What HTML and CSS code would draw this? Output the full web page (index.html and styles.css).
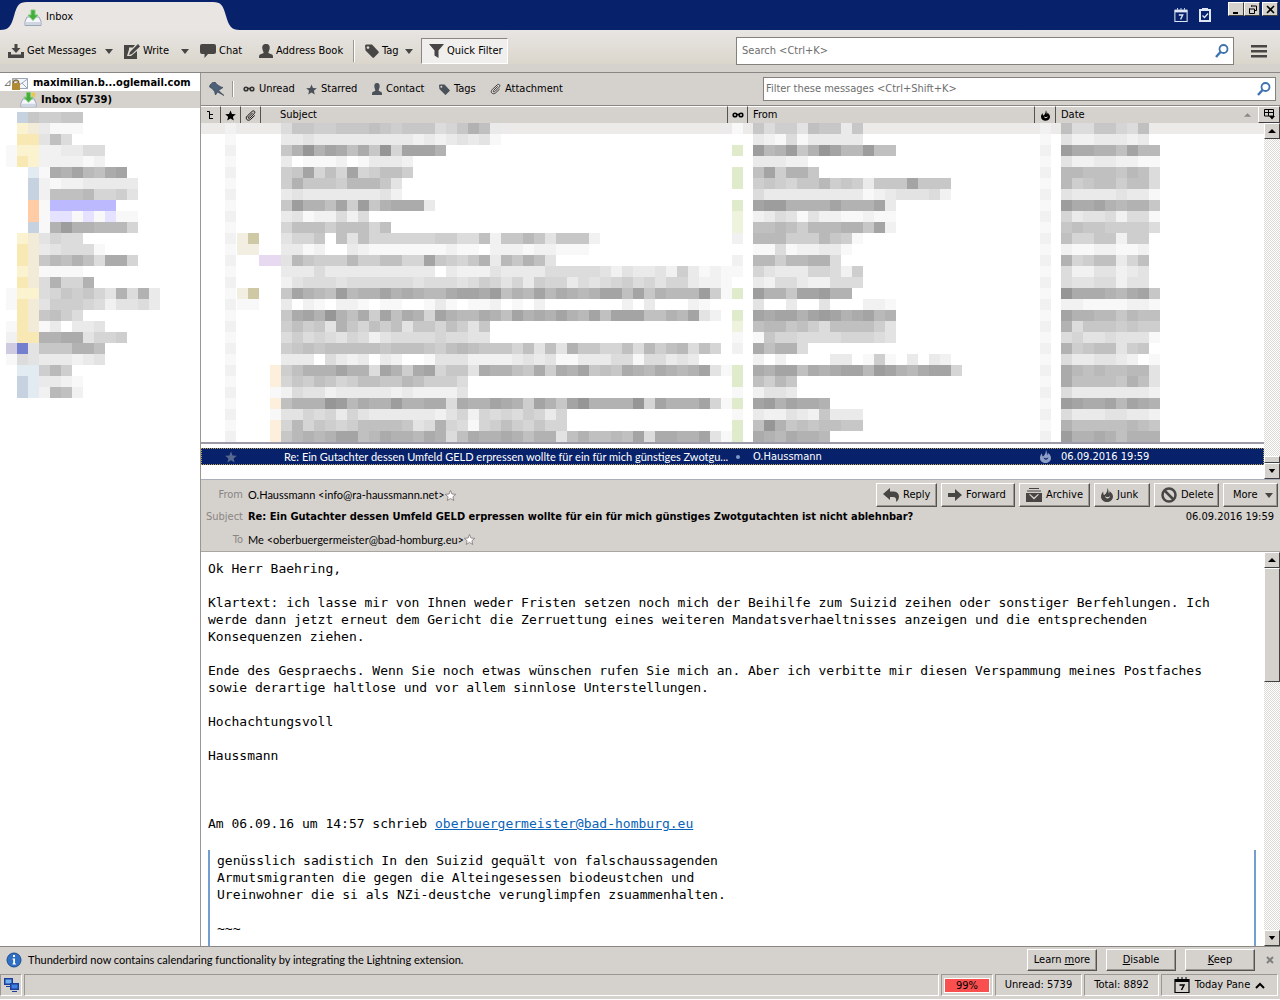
FILE: index.html
```html
<!DOCTYPE html>
<html lang="en">
<head>
<meta charset="utf-8">
<title>Inbox</title>
<link rel="stylesheet" href="styles.css">
</head>
<body>
<svg class="defs" width="0" height="0" aria-hidden="true">
  <symbol id="star" viewBox="0 0 12 12"><path d="M6 0.5 7.6 4.4 11.8 4.7 8.6 7.4 9.6 11.5 6 9.2 2.4 11.5 3.4 7.4 0.2 4.7 4.4 4.4Z"/></symbol>
  <symbol id="flame" viewBox="0 0 12 14"><path fill-rule="evenodd" d="M6.500 0C8 2 7 4 8 5.500C8.500 4.500 8.500 4 8.300 3C10.500 4.500 12 6.500 12 8.500C12 12 9 14 6 14S0 12 0 8.500C0 6 1.500 4.500 2.200 3.500C2.300 5 2.200 6.500 3.200 7C5 6 6.500 3.500 6.500 0ZM4 7.500C4 11.500 9 11.500 9 7.500C8.500 9.500 4.500 9.500 4 7.500Z"/></symbol>
  <symbol id="clip" viewBox="0 0 12 12"><path d="M8.500 3 4 7.500C3 8.800 4.300 9.800 5.300 8.800L10 4C12 1.800 9.500 0 7.800 1.500L2.500 6.500C-0.500 9.500 3 12.500 5.800 10.500L10.500 6" fill="none" stroke="currentColor" stroke-width="1"/></symbol>
  <symbol id="glasses" viewBox="0 0 12 6"><g fill="none" stroke="currentColor" stroke-width="1.600"><circle cx="3" cy="3" r="1.800"/><circle cx="9" cy="3" r="1.800"/><path d="M4.500 2.500h3"/></g></symbol>
  <symbol id="tagicon" viewBox="0 0 14 14"><path fill-rule="evenodd" d="M0 1.500 1 0.500 7 0.500 13.500 7.500C14 8 14 8.500 13.500 9L9 13.500C8.500 14 8 14 7.500 13.500L0.500 6.500ZM3 2.200a1.300 1.300 0 1 0 0.010 0Z"/></symbol>
  <symbol id="person" viewBox="0 0 14 14"><path d="M7 0C10 0 11 2 10.700 4.500C10.400 6.500 9.500 7.500 9.300 9L13 10.500C14 11 14 12 14 14H0C0 12 0 11 1 10.500L4.700 9C4.500 7.500 3.600 6.500 3.300 4.500C3 2 4 0 7 0Z"/></symbol>
  <symbol id="search" viewBox="0 0 14 14"><g fill="none" stroke="#3e72b0"><circle cx="8.500" cy="5" r="4" stroke-width="1.800"/><path d="M5.500 8 1 13" stroke-width="2.400"/></g></symbol>
  <symbol id="down" viewBox="0 0 8 5"><path d="M0 0H8L4 5Z"/></symbol>
  <symbol id="up" viewBox="0 0 8 4"><path d="M0 4H8L4 0Z"/></symbol>
  <symbol id="tray" viewBox="0 0 18 17"><path d="M3 8 1 12.500V16.500H17V12.500L15 8Z" fill="#f4f6fb" stroke="#9aa5b5"/><path d="M2 13H16V16H2Z" fill="#cdd6e2"/><path d="M7 1H11V6H14L9 11.500 4 6H7Z" fill="#3fae3a" stroke="#7fca76"/></symbol>
  <symbol id="calendar" viewBox="0 0 16 16"><path d="M1 2.500H15V15.500H1Z" fill="none" stroke="currentColor" stroke-width="1.200"/><path d="M1 3.500H15" stroke="currentColor" stroke-width="3"/><path d="M4 0V2M8 0V2M12 0V2" stroke="currentColor"/><path d="M5.500 8H10L7.500 13" fill="none" stroke="currentColor" stroke-width="1.500"/></symbol>
</svg>

<header class="titlebar">
  <div class="tab">
    <svg class="tab-shape" viewBox="0 0 240 28" preserveAspectRatio="none"><path d="M0 28C9 28 11 24 14 14C17 3 19 0 27 0H213C221 0 223 3 226 14C229 24 231 28 240 28Z"/></svg>
    <svg class="tab-icon" width="18" height="17"><use href="#tray"/></svg>
    <span>Inbox</span>
  </div>
  <div class="title-tools">
    <svg width="14" height="14" class="pale"><use href="#calendar"/></svg>
    <svg width="12" height="14" viewBox="0 0 12 14"><path d="M1 2H11V13H1Z" fill="none" stroke="#dfe6f5" stroke-width="2"/><path d="M3 0H9V3H3Z" fill="#dfe6f5"/><path d="M3.500 7.500 5.500 9.500 9 5.500" fill="none" stroke="#dfe6f5" stroke-width="1.300"/></svg>
  </div>
  <div class="window-buttons">
    <button type="button" aria-label="Minimize"><svg width="9" height="9"><path d="M1 7H6V9H1Z"/></svg></button>
    <button type="button" aria-label="Restore"><svg width="9" height="9"><path d="M3.500 0.500V1.500M3 1H8.500V5.500H7M1 4H6.500V8.500H1.500V3.500" fill="none" stroke="#000"/></svg></button>
    <button type="button" aria-label="Close" class="close"><svg width="9" height="9"><path d="M1 1 8 8M8 1 1 8" stroke="#000" stroke-width="1.600"/></svg></button>
  </div>
</header>

<nav class="toolbar">
  <button type="button" class="tool get"><svg width="16" height="14" viewBox="0 0 16 14"><path d="M6.500 0H9.500V4H12.500L8 9 3.500 4H6.500Z"/><path d="M0 8H3V10.500H13V8H16V14H0Z"/></svg>Get Messages</button>
  <button type="button" class="drop" aria-label="Get messages options"><svg width="8" height="5"><use href="#down"/></svg></button>
  <button type="button" class="tool write"><svg width="16" height="15" viewBox="0 0 16 15"><path fill-rule="evenodd" d="M0 1H11L9 3.500H5V5.500L3 12H7L13 7V15H0Z"/><path d="M14 0 16 2.500 8 10 5 11 6 8Z"/></svg>Write</button>
  <button type="button" class="drop" aria-label="Write options"><svg width="8" height="5"><use href="#down"/></svg></button>
  <button type="button" class="tool chat"><svg width="16" height="14" viewBox="0 0 16 14"><path d="M2 0H14Q16 0 16 2V8Q16 10 14 10H8L4.500 14V10H2Q0 10 0 8V2Q0 0 2 0Z"/></svg>Chat</button>
  <button type="button" class="tool book"><svg width="14" height="14"><use href="#person"/></svg>Address Book</button>
  <span class="divider"></span>
  <button type="button" class="tool tag"><svg width="14" height="14"><use href="#tagicon"/></svg>Tag<svg class="caret" width="8" height="5"><use href="#down"/></svg></button>
  <button type="button" class="tool pressed"><svg width="15" height="14" viewBox="0 0 15 14"><path d="M0 0H15L9.500 6.500V14L5.500 11.500V6.500Z"/></svg>Quick Filter</button>
  <label class="field global-search"><input type="text" placeholder="Search &lt;Ctrl+K&gt;" aria-label="Search"><svg width="14" height="14"><use href="#search"/></svg></label>
  <button type="button" class="menu" aria-label="Menu"><svg width="16" height="14"><path d="M0 1H16V3.500H0ZM0 6H16V8.500H0ZM0 11H16V13.500H0Z"/></svg></button>
</nav>

<main class="panes">
  <aside class="folders">
    <div class="folder account"><svg width="24" height="14" viewBox="0 0 24 14"><path d="M1 9.500H6V4.500Z" fill="#fff" stroke="#777"/><path d="M8.500 2.500H23.500V12.500H8.500Z" fill="#f2f5fb" stroke="#9aa5b5"/><path d="M8.500 3 16 8.500 23.500 3M23.500 12.500 18 7" fill="none" stroke="#9aa5b5"/><path d="M8 7H16V14H8Z" fill="#b08a35"/><path d="M9.500 7V5.500Q12 2.500 14.500 5.500V7" fill="none" stroke="#8c6a25" stroke-width="1.500"/></svg>maximilian.b...oglemail.com</div>
    <div class="folder inbox"><svg width="17" height="17" viewBox="0 0 18 17"><use href="#tray"/><path d="M14 0 15 2 17.500 2 15.700 4 16.500 6.500 14 5 12 6.500 12.500 4 11 2H13Z" fill="#e8c84a"/></svg>Inbox (5739)</div>
    <svg class="mosaic folder-mosaic" data-block="folders"></svg>
  </aside>

  <section class="content">
    <div class="filterbar">
      <svg width="15" height="14" viewBox="0 0 15 14"><path d="M3.500 0.500 6 0 8 2.500 12 5 14 5.500 9.500 8.500 15 13.500 8.500 10 6.500 13 5.500 9.500 3 6.500 0.500 5 1 3Z" fill="#4c6076" stroke="#2e3b48" stroke-width="0.600"/></svg>
      <span class="divider"></span>
      <button type="button" class="unread"><svg width="12" height="6"><use href="#glasses"/></svg>Unread</button>
      <button type="button" class="starred"><svg width="11" height="11"><use href="#star"/></svg>Starred</button>
      <button type="button" class="contact"><svg width="10" height="12" viewBox="0 0 14 14" preserveAspectRatio="none"><use href="#person"/></svg>Contact</button>
      <button type="button" class="tags"><svg width="11" height="11"><use href="#tagicon"/></svg>Tags</button>
      <button type="button" class="attach"><svg width="11" height="12"><use href="#clip"/></svg>Attachment</button>
      <label class="field filter-search"><input type="text" placeholder="Filter these messages &lt;Ctrl+Shift+K&gt;" aria-label="Filter these messages"><svg width="14" height="14"><use href="#search"/></svg></label>
    </div>

    <div class="list">
      <table>
        <colgroup><col class="c-icon"><col class="c-icon"><col class="c-icon"><col class="c-subject"><col class="c-icon"><col class="c-from"><col class="c-junk"><col class="c-date"></colgroup>
        <thead>
          <tr>
            <th><svg width="8" height="9" viewBox="0 0 8 9"><path d="M0 0.500H2.500V8M2.500 3.500H6M3 7.500H6" fill="none" stroke="#000"/></svg></th>
            <th><svg width="11" height="11"><use href="#star"/></svg></th>
            <th><svg width="11" height="11"><use href="#clip"/></svg></th>
            <th class="subject">Subject</th>
            <th><svg width="12" height="6"><use href="#glasses"/></svg></th>
            <th class="text">From</th>
            <th><svg width="9" height="11"><use href="#flame"/></svg></th>
            <th class="text date">Date<svg class="sort" width="7" height="4"><use href="#up"/></svg></th>
          </tr>
        </thead>
        <tbody>
          <tr class="blurred">
            <td></td>
            <td><svg class="mosaic" data-block="stars"></svg></td>
            <td></td>
            <td class="wide"><svg class="mosaic marks" data-block="marks"></svg><svg class="mosaic" data-block="subjects"></svg></td>
            <td><svg class="mosaic" data-block="reads"></svg></td>
            <td><svg class="mosaic pad" data-block="senders"></svg></td>
            <td><svg class="mosaic pad" data-block="stars"></svg></td>
            <td><svg class="mosaic pad" data-block="dates"></svg></td>
          </tr>
          <tr class="selected">
            <td></td>
            <td><svg class="dim" width="12" height="12"><use href="#star"/></svg></td>
            <td></td>
            <td class="subject narrow">Re: Ein Gutachter dessen Umfeld GELD erpressen wollte für ein für mich günstiges Zwotgu...</td>
            <td><span class="dot"></span></td>
            <td class="text">O.Haussmann</td>
            <td><svg class="dim light" width="11" height="13"><use href="#flame"/></svg></td>
            <td class="text">06.09.2016 19:59</td>
          </tr>
        </tbody>
      </table>
      <div class="scrollbar">
        <button type="button" aria-label="Scroll up"><svg width="8" height="4"><use href="#up"/></svg></button>
        <span class="space"></span><span class="thumb"></span>
        <button type="button" aria-label="Scroll down"><svg width="8" height="4" viewBox="0 0 8 5"><use href="#down"/></svg></button>
      </div>
      <button type="button" class="picker" aria-label="Select columns"><svg width="11" height="11"><path d="M0.500 0.500H9.500V7H0.500ZM0 3.500H9M4.500 1V7" fill="none" stroke="#000"/><path d="M5 7H11L8 10.500Z"/></svg></button>
    </div>

    <div class="headers">
      <div class="line first"><span class="key">From</span><span class="grow narrow">O.Haussmann &lt;info@ra-haussmann.net&gt;<svg width="11" height="11" class="outline"><use href="#star"/></svg></span>
        <div class="actions">
          <button type="button" class="a-reply"><svg width="16" height="14" viewBox="0 0 16 14"><path d="M7 0V3.500H11Q16 4 16 9Q16 12 13 14Q14 9 10 9H7V12L0 6Z"/></svg>Reply</button>
          <button type="button" class="a-forward"><svg width="14" height="12" viewBox="0 0 14 12"><path d="M0 4H7V0L14 6 7 12V8H0Z"/></svg>Forward</button>
          <button type="button" class="a-archive"><svg width="16" height="14" viewBox="0 0 16 14"><path d="M3 0.500H13M1 3H15" stroke="#444"/><path fill-rule="evenodd" d="M0 5H16V14H0ZM3 6.500 8 11.500 13 6.500 12 6 8 9.500 4 6Z"/></svg>Archive</button>
          <button type="button" class="a-junk"><svg width="12" height="14"><use href="#flame"/></svg>Junk</button>
          <button type="button" class="a-delete"><svg width="16" height="16" viewBox="0 0 16 16"><circle cx="8" cy="8" r="6.500" fill="none" stroke="#484644" stroke-width="2.500"/><path d="M3.500 3.500 12.500 12.500" stroke="#484644" stroke-width="2.500"/></svg>Delete</button>
          <button type="button" class="a-more">More<svg width="8" height="5"><use href="#down"/></svg></button>
        </div>
      </div>
      <div class="line"><span class="key">Subject</span><strong class="grow">Re: Ein Gutachter dessen Umfeld GELD erpressen wollte für ein für mich günstiges Zwotgutachten ist nicht ablehnbar?</strong><span>06.09.2016 19:59</span></div>
      <div class="line last"><span class="key">To</span><span class="grow narrow">Me &lt;oberbuergermeister@bad-homburg.eu&gt;<svg width="11" height="11" class="outline"><use href="#star"/></svg></span></div>
    </div>

    <div class="reader">
      <article>
        <p>Ok Herr Baehring,</p>
        <p>Klartext: ich lasse mir von Ihnen weder Fristen setzen noch mich der Beihilfe zum Suizid zeihen oder sonstiger Berfehlungen. Ich werde dann jetzt erneut dem Gericht die Zerruettung eines weiteren Mandatsverhaeltnisses anzeigen und die entsprechenden Konsequenzen ziehen.</p>
        <p>Ende des Gespraechs. Wenn Sie noch etwas wünschen rufen Sie mich an. Aber ich verbitte mir diesen Verspammung meines Postfaches sowie derartige haltlose und vor allem sinnlose Unterstellungen.</p>
        <p>Hochachtungsvoll</p>
        <p class="signature">Haussmann</p>
        <p class="cite">Am 06.09.16 um 14:57 schrieb <a href="mailto:oberbuergermeister@bad-homburg.eu">oberbuergermeister@bad-homburg.eu</a></p>
        <blockquote>
          <p>genüsslich sadistich In den Suizid gequält von falschaussagenden<br>Armutsmigranten die gegen die Alteingesessen biodeustchen und<br>Ureinwohner die si als NZi-deustche verunglimpfen zsuammenhalten.</p>
          <p>~~~</p>
        </blockquote>
      </article>
      <div class="scrollbar">
        <button type="button" aria-label="Scroll up"><svg width="8" height="4"><use href="#up"/></svg></button>
        <span class="thumb big"></span><span class="space"></span>
        <button type="button" aria-label="Scroll down"><svg width="8" height="4" viewBox="0 0 8 5"><use href="#down"/></svg></button>
      </div>
    </div>
  </section>
</main>

<div class="notice">
  <svg width="16" height="16"><circle cx="8" cy="8" r="7" fill="#2f6fc4" stroke="#1d4c92"/><path d="M7 3H9V5H7ZM6.500 6.500H9V11.500H10V12.500H6.500V11.500H7.200V7.500H6.500Z" fill="#fff"/></svg>
  <span class="grow narrow">Thunderbird now contains calendaring functionality by integrating the Lightning extension.</span>
  <button type="button"><span>Learn <u>m</u>ore</span></button>
  <button type="button"><span><u>D</u>isable</span></button>
  <button type="button"><span><u>K</u>eep</span></button>
  <button type="button" class="dismiss" aria-label="Close"><svg width="8" height="8"><path d="M1 1 7 7M7 1 1 7" stroke="#808080" stroke-width="2"/></svg></button>
</div>

<footer class="status">
  <span class="cell online"><svg width="15" height="14" viewBox="0 0 15 14"><path d="M0 0H9V7H0ZM2 8H7V9H2Z" fill="#1d3f9a"/><path d="M1.500 1.500H7.500V5.500H1.500Z" fill="#6fb0f0"/><path d="M6 5H15V12H6ZM8 13H13V14H8Z" fill="#1d3f9a"/><path d="M7.500 6.500H13.500V10.500H7.500Z" fill="#3f7fe0"/></svg></span>
  <span class="cell grow"></span>
  <span class="cell quota"><span>99%</span></span>
  <span class="cell unread-count">Unread: 5739</span>
  <span class="cell total">Total: 8892</span>
  <button type="button" class="cell today"><svg width="16" height="16"><use href="#calendar"/></svg>Today Pane<svg width="10" height="7"><path d="M1 6 5 2 9 6" fill="none" stroke="#000" stroke-width="2"/></svg></button>
</footer>
<script src="mosaic.js"></script>
</body>
</html>
```

FILE: styles.css
```css
* { box-sizing: border-box; }

body {
  margin: 0;
  height: 100vh;
  display: flex;
  flex-direction: column;
  overflow: hidden;
  background: #d5d1cd;
  color: #000;
  font: 11px/14px "DejaVu Sans Condensed", "Noto Sans", sans-serif;
}

.defs { position: absolute; }
svg { flex: none; display: block; }
button { font: inherit; color: inherit; background: none; border: 0; padding: 0; display: flex; align-items: center; white-space: nowrap; }
.grow { flex: 1; min-width: 0; }
.narrow { font-family: Lato, "Noto Sans", sans-serif; }

/* Title bar */
.titlebar { height: 30px; flex: none; display: flex; background: #07226a; }
.tab { position: relative; width: 240px; padding: 4px 0 0 24px; display: flex; align-items: center; gap: 4px; }
.tab span { position: relative; }
.tab-shape { position: absolute; left: 0; top: 2px; width: 100%; height: 28px; fill: #e8e5e3; }
.tab-icon { position: relative; }
.title-tools { margin-left: auto; display: flex; gap: 11px; padding: 8px 17px 0 0; }
.pale { color: #dfe6f5; }
.window-buttons { display: flex; padding: 2px 2px 0 0; }
.window-buttons button { width: 16px; height: 14px; justify-content: center; background: #d5d1cd; border: 1px solid; border-color: #fff #404040 #404040 #fff; }
.window-buttons .close { margin-left: 2px; }

/* Main toolbar */
.toolbar { height: 43px; flex: none; display: flex; align-items: center; padding: 0 13px 0 8px; background: linear-gradient(#e8e5e3, #dad6cc 34px, #d5d1cd 34px); border-bottom: 1px solid #8a8683; }
.toolbar svg, .actions svg { fill: #484644; }
.tool { gap: 3px; height: 26px; }
.get { width: 97px; }
.drop { width: 19px; }
.write { width: 57px; }
.chat { width: 59px; }
.book { width: 94px; }
.divider { width: 1px; height: 22px; background: #9a9692; border-right: 1px solid #fff; box-sizing: content-box; }
.tag { width: 66px; padding-left: 10px; }
.tag .caret { margin-left: 3px; }
.pressed { width: 87px; padding-left: 7px; background: #f1efed; border: 1px solid; border-color: #8a8683 #fff #fff #8a8683; }
.field { display: flex; align-items: center; background: #fff; border: 1px solid #84807c; padding-right: 4px; }
.field input { flex: 1; min-width: 0; border: 0; outline: 0; background: none; font: inherit; padding: 0 0 0 5px; }
.field input::placeholder { color: #6e6e6e; opacity: 1; }
.toolbar .field svg, .field svg { fill: none; }
.global-search { margin-left: auto; width: 498px; height: 28px; }
.menu { margin-left: 17px; }

/* Panes */
.panes { flex: 1; min-height: 0; display: flex; }
.folders { width: 201px; flex: none; background: #fff; border-right: 1px solid #9a9692; }
.folder { display: flex; align-items: center; height: 17px; font-weight: bold; white-space: nowrap; }
.account { padding-left: 4px; gap: 5px; margin-top: 1px; }
.inbox { padding-left: 20px; gap: 4px; background: #d5d1cd; }
.folder-mosaic { margin: 4px 0 0 6px; }
.content { flex: 1; min-width: 0; display: flex; flex-direction: column; }

.filterbar { height: 33px; flex: none; display: flex; align-items: center; padding: 0 4px 0 8px; border-bottom: 1px solid #8a8683; }
.filterbar .divider { margin: 0 9px 0 8px; height: 16px; }
.filterbar button { gap: 4px; }
.filterbar button svg { fill: #4a5158; color: #333; }
.unread { width: 63px; }
.starred { width: 66px; }
.contact { width: 67px; }
.tags { width: 51px; }
.filter-search { margin-left: auto; width: 513px; height: 24px; }
.filter-search input { padding-left: 2px; }

/* Message list */
.list { position: relative; display: flex; flex: none; height: 373px; background: #fff; }
.list table { flex: 1; width: 0; align-self: flex-start; border-collapse: separate; border-spacing: 0; table-layout: fixed; }
.c-icon { width: 20px; }
.c-from { width: 287px; }
.c-junk { width: 21px; }
.c-date { width: 208px; }
th { height: 17px; padding: 0; font-weight: normal; text-align: left; background: #d5d1cd; border-right: 1px solid #55524f; border-top: 1px solid #fff; }
th svg { margin: 0 auto; }
th.subject { padding-left: 19px; }
.text { padding-left: 5px; }
.date { position: relative; }
.sort { position: absolute; right: 12px; top: 6px; fill: #8a8683; }
td { padding: 0; white-space: nowrap; overflow: hidden; }
.blurred td { height: 325px; vertical-align: top; background: linear-gradient(#ecebea 11px, transparent 11px 319px, #9a9aa8 319px 321px, transparent 321px); }
.blurred .mosaic { margin-left: 4px; }
.blurred .pad { margin-left: 5px; }
.blurred .wide { overflow: visible; }
.blurred .wide .mosaic { display: inline-block; margin: 0; vertical-align: top; }
.blurred .wide .marks { margin-left: -24px; }
.selected { background: #07226a; color: #fff; outline: 1px dotted #b9a15c; outline-offset: -1px; }
.selected td { height: 17px; }
.selected td.subject { padding-left: 23px; }
.dim { margin: 0 auto; fill: #56688f; }
.dim.light { fill: #8fa0c8; }
.dot { display: block; width: 4px; height: 4px; margin: 0 auto; border-radius: 2px; background: #7f9ac8; }
.picker { position: absolute; right: 0; top: 0; width: 22px; height: 17px; justify-content: center; background: #d5d1cd; border: 1px solid; border-color: #fff #404040 #404040 #fff; }

.scrollbar { width: 16px; flex: none; display: flex; flex-direction: column; background: repeating-conic-gradient(#fff 0 25%, #dcd9d5 0 50%) 0 0 / 2px 2px; }
.list .scrollbar { padding-top: 17px; }
.scrollbar button, .thumb { height: 16px; flex: none; justify-content: center; background: #d5d1cd; border: 1px solid; border-color: #fff #404040 #404040 #fff; }
.space { flex: 1; }
.thumb { height: 7px; }
.thumb.big { height: 114px; }

/* Message header */
.headers { height: 73px; flex: none; border-top: 1px solid #a9afb8; border-bottom: 1px solid #a9a5a1; padding: 2px 2px 0 0; }
.line { display: flex; align-items: center; height: 18px; padding-right: 4px; white-space: nowrap; }
.line.first { height: 26px; padding-right: 0; }
.line.last { height: 27px; }
.key { width: 42px; margin-right: 5px; text-align: right; color: #8a8683; }
.line .grow { display: flex; align-items: center; }
.outline { fill: #fff; stroke: #8a8683; overflow: visible; }
.actions { display: flex; gap: 4px; }
.actions button { height: 24px; padding: 0 0 0 6px; gap: 4px; border: 1px solid; border-color: #fff #55524f #55524f #fff; box-shadow: inset -1px -1px #9a9692; }
.a-reply { width: 61px; }
.a-forward { width: 74px; }
.a-archive { width: 71px; }
.a-junk { width: 56px; }
.a-delete { width: 65px; }
.actions .a-more { width: 55px; padding-left: 9px; gap: 7px; }

/* Message text */
.reader { flex: 1; min-height: 0; display: flex; background: #fff; }
article { flex: 1; min-width: 0; overflow: hidden; padding: 8px 8px 0 7px; font: 13px/17px "DejaVu Sans Mono", "Liberation Mono", monospace; }
article p { margin: 0 0 17px; padding-right: 16px; }
article .signature { margin-bottom: 51px; }
article a { color: #0a63b8; }
blockquote { margin: 18px 0 0; padding: 2px 8px 40px 7px; border: solid #729fcf; border-width: 0 2px; }

/* Notification and status */
.notice { height: 26px; flex: none; display: flex; align-items: center; padding: 0 6px; gap: 6px; border-top: 1px solid #8a8683; }
.notice button { width: 70px; height: 22px; justify-content: center; border: 1px solid; border-color: #fff #55524f #55524f #fff; box-shadow: inset -1px -1px #9a9692; margin-left: 3px; }
.notice .dismiss { width: 8px; border: 0; box-shadow: none; margin-left: 5px; }
.status { height: 28px; flex: none; display: flex; gap: 2px; padding: 2px 2px 3px 0; border-bottom: 1px solid #fff; }
.cell { display: flex; align-items: center; justify-content: center; border: 1px solid; border-color: #9a9692 #fff #fff #9a9692; }
.online { width: 22px; }
.quota { width: 52px; padding: 2px; }
.quota span { flex: 1; height: 15px; text-align: center; background: #f9504f; border: 1px solid #fff; }
.unread-count { width: 87px; }
.total { width: 75px; }
.today { width: 117px; gap: 5px; }
```

FILE: mosaic.js
```js
// Pixelated previews: one string per 11px row, one character per 11px tile.
// Hex digits are shades of grey, capitals are tints from the palette.
const TILE = 11;
const TINTS = {
  Y: "#f8e8b4", Z: "#fbf3cf", W: "#f1ebd8", B: "#c6d2e0", C: "#e2eaf2",
  O: "#ffcca6", P: "#bdb9ff", Q: "#e4e2ff", N: "#7480cf", M: "#cdcae2",
  G: "#dfebca", H: "#edf3dd", K: "#cfc8a4", L: "#f2efe2", V: "#e6d9f0", R: "#fcf0dc"
};
const BLOCKS = {
  folders: [
    ".B87788", ".ZW3111", ".YY495", "1ZZ223355", "1YZ222212", "..C1cbda9cd", "..B212233333",
    "..B2999a6674", "..O1PPPPPP", "..O1QQ1Q1Q11", "..B1bebbaaa6", ".ZW4655", ".YW345551",
    ".YW8a9b95cc6", ".ZW1111", ".YW5b66b", "1ZZ5687864b5b3", "1YW47776524453", ".YW8975",
    "1YW130334", "2YYbbcc4667", "MN4888bb9", "154333234", ".CC7a7", ".BC3321", ".BC2a92"
  ],
  stars: Array.from({ length: 29 }, (_, i) => (i % 2 ? "1" : "2")),
  marks: [
    "", "", "", "", "", "", "", "", "", "", "LK", "LL", "..VV", "", "", "LK", "11", "", "", "", "", "",
    "...R", "...R", "...1", "...R", "...1", "...R", "...R"
  ],
  subjects: [
    "58877888987888568b93", "33433333333323234341", "8bfbdc9c8f6dddb", "301112013332",
    "78d696d67997", "7b8887aaa84", "34333333342", "8ebb9d7e8bccc3", "34122525", "6999799969",
    "4668094966666677559288a848882", "3312003211111112110222122111",
    "4a8777a779966d8768b3a8b94",
    "33353333333333032224333355555424334273121",
    "24555455555545554576463766354567564663221",
    "8dba9eabbdbcbaacddce9badacbabdd9d8baaae71",
    "30210221011001310112010200000002030002100",
    "8cdbfb9c7d9cb6dbaacb9dbcbdbad9ddd99bad42",
    "79784b8697948869748", "5756546524555565544",
    "7898999998999879a988869494b886695a79a596",
    "33305323032001444222234341133355155343",
    "79bbbdbb5db7cd6884cbb98c7cbd898cbacbabd41",
    "68798679988a97775", "25442333332322224",
    "9bbbfeacbbebbcc5cbbdcb7db8dfbbbbf6dbbbd61",
    "44656364333333246265657636", "6a687679999845b65167976866",
    "8ababdd9acbbacb59cbbcb9bb49b99a9d5ccbbd41"
  ],
  reads: [
    "1", "", "G", "", "G", "G", "", "G", "H", "H", "2", "", "2", "1", "", "G", "", "G", "H",
    "1", "2", "", "G", "G", "1", "G", "1", "G", "G"
  ],
  senders: [
    "8577498838", "3215133333", "eabe8bfdaae99", "33322", "9d7bb8", "787688a7873888d888",
    "533333333312344452", "deebbbbdbbbd3", "2354142211211", "99a97aaabb8d2", "aaa777a871",
    "115122331", "aa7aabb5", "6433366527", "3255322555", "ebb8ddebb", "4003004000221",
    "dcddbdedbcdab", "9aa8975999974", "1866555566654", "c9bb5", "202000033017103032",
    "cbdd9cbcddaedbacdd6", "97a8", "2443", "debdccb", "3224328333", "9fb8989988", "cbacbba"
  ],
  dates: [
    "95588659", "42233323", "eccbb9daa", "422332211", "aa9998a95", "a78997995", "433334331",
    "eccdbabb8", "634452551", "898877775", "96688277", "21122112", "b6799369", "52244234",
    "54455244", "fcccbacd8", "221111221", "dbbaa8a99", "b58887877", "564454441", "b7899478",
    "533443201", "ca9a99aa4", "c99998b94", "533333332", "edccdadcb", "533344332", "b99999a98",
    "ebbcb9bbb"
  ]
};

function shade(code) {
  if (TINTS[code]) return TINTS[code];
  const level = 255 - 7 * parseInt(code, 16);
  return `rgb(${level},${level},${level})`;
}

for (const svg of document.querySelectorAll("svg[data-block]")) {
  const rows = BLOCKS[svg.dataset.block];
  const columns = Math.max(...rows.map(row => row.length));
  svg.setAttribute("width", columns * TILE);
  svg.setAttribute("height", rows.length * TILE);
  rows.forEach((row, y) => [...row].forEach((code, x) => {
    if (code === ".") return;
    const rect = document.createElementNS("http://www.w3.org/2000/svg", "rect");
    rect.setAttribute("x", x * TILE);
    rect.setAttribute("y", y * TILE);
    rect.setAttribute("width", TILE);
    rect.setAttribute("height", TILE);
    rect.setAttribute("fill", shade(code));
    svg.append(rect);
  }));
}
```
